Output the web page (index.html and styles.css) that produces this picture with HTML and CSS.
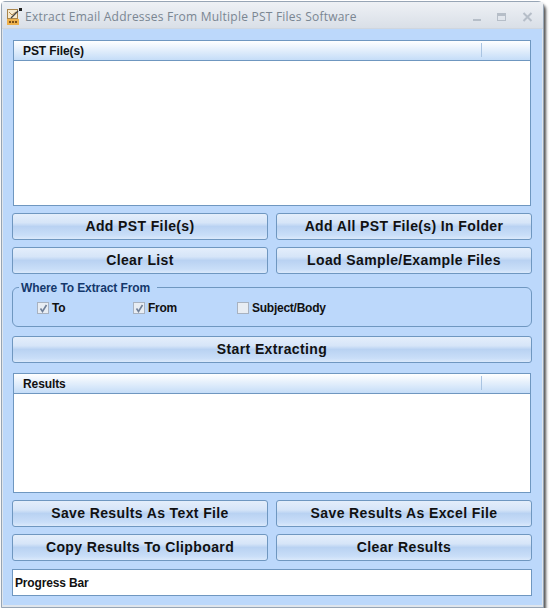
FILE: index.html
```html
<!DOCTYPE html>
<html lang="en">
<head>
  <meta charset="UTF-8">
  <title>Extract Email Addresses From Multiple PST Files Software</title>
  <link rel="stylesheet" href="styles.css">
</head>
<body>
  <div class="window">
    <div class="titlebar">
      <svg class="app-icon" width="18" height="18" viewBox="0 0 18 18">
        <rect x="1.5" y="1.5" width="10" height="9" fill="#f6ead0" stroke="#a8844c"/>
        <path d="M3 4l3 3 4-3" fill="none" stroke="#b08a50"/>
        <path d="M5 10l7-7" stroke="#444" stroke-width="1.2"/>
        <rect x="13" y="0" width="3" height="3" fill="#222"/>
        <rect x="1" y="11" width="12" height="6" fill="#eeb04a"/>
        <path d="M3 13h2v2H3zM6 13h2v2H6zM9 13h2v2H9z" fill="#7a5018"/>
      </svg>
      <span class="title">Extract Email Addresses From Multiple PST Files Software</span>
      <div class="win-buttons">
        <span class="win-min"></span>
        <span class="win-max"></span>
        <svg class="win-close" width="11" height="10" viewBox="0 0 11 10">
          <path d="M1.5 1l8 8M9.5 1l-8 8" stroke="#b6bec8" stroke-width="2"/>
        </svg>
      </div>
    </div>

    <div class="client">
      <div class="list list-files">
        <div class="list-head"><span class="col-name">PST File(s)</span><span class="col-rest"></span></div>
      </div>

      <div class="btn-row">
        <button>Add PST File(s)</button>
        <button>Add All PST File(s) In Folder</button>
      </div>
      <div class="btn-row">
        <button>Clear List</button>
        <button>Load Sample/Example Files</button>
      </div>

      <fieldset class="group">
        <legend>Where To Extract From</legend>
        <label class="check check-to"><span class="box"><svg width="9" height="9" viewBox="0 0 9 9"><path d="M1.5 4.5l2 3 4-6.5" fill="none" stroke="#6f7f98" stroke-width="1.6"/></svg></span>To</label>
        <label class="check check-from"><span class="box"><svg width="9" height="9" viewBox="0 0 9 9"><path d="M1.5 4.5l2 3 4-6.5" fill="none" stroke="#6f7f98" stroke-width="1.6"/></svg></span>From</label>
        <label class="check"><span class="box"></span>Subject/Body</label>
      </fieldset>

      <button class="btn-wide">Start Extracting</button>

      <div class="list list-results">
        <div class="list-head"><span class="col-name">Results</span><span class="col-rest"></span></div>
      </div>

      <div class="btn-row">
        <button>Save Results As Text File</button>
        <button>Save Results As Excel File</button>
      </div>
      <div class="btn-row">
        <button>Copy Results To Clipboard</button>
        <button>Clear Results</button>
      </div>

      <div class="progress">Progress Bar</div>
    </div>
  </div>
</body>
</html>
```

FILE: styles.css
```css
* {
  box-sizing: border-box;
}
body {
  margin: 0;
  background-color: #fff;
  font-family: "Liberation Sans", Arial, sans-serif;
}
.window {
  width: 543px;
  height: 607px;
  margin: 1px 0 0 1px;
  display: flex;
  flex-direction: column;
  border: 1px solid #97a5b5;
  border-top-right-radius: 6px;
  border-top-left-radius: 4px;
  box-shadow: 2px 3px 3px rgba(50, 50, 50, 0.85);
  background-color: #dfe5ec;
}
.titlebar {
  height: 27px;
  flex: none;
  display: flex;
  align-items: center;
  padding: 3px 0 0 4px;
  background: linear-gradient(#eef1f5, #d9dfe7);
  border-bottom: 1px solid #cfd6df;
}
.app-icon {
  flex: none;
}
.title {
  margin-left: 1px;
  font-family: "Open Sans", sans-serif;
  font-size: 12px;
  letter-spacing: 0.23px;
  color: #7a8692;
  white-space: nowrap;
}
.win-buttons {
  margin-left: auto;
  display: flex;
  align-items: center;
  gap: 16px;
  padding-right: 10px;
}
.win-min {
  width: 8px;
  height: 2px;
  margin-top: 6px;
  background-color: #b6bec8;
}
.win-max {
  width: 9px;
  height: 8px;
  border: 1px solid #b6bec8;
  border-top-width: 3px;
}
.client {
  flex: 1;
  margin: 0 1px 2px;
  padding: 11px 10px 0 9px;
  background-color: #bcd8fb;
  display: flex;
  flex-direction: column;
}
.list {
  margin: 0 1px;
  background-color: #fff;
  border: 1px solid #6f97c0;
}
.list-files {
  height: 166px;
}
.list-results {
  height: 120px;
  margin-top: 10px;
}
.list-head {
  height: 20px;
  display: flex;
  background: linear-gradient(#fff, #c5ddf8);
  border-bottom: 1px solid #6f97c0;
  font-size: 12px;
  font-weight: bold;
  color: #111;
  line-height: 21px;
}
.col-name {
  flex: 1;
  padding-left: 9px;
  letter-spacing: -0.1px;
}
.col-rest {
  width: 49px;
  margin: 2px 0 3px;
  border-left: 1px solid #a9c4e2;
}
.btn-row {
  display: flex;
  gap: 8px;
  margin-top: 7px;
}
button {
  flex: 1;
  height: 27px;
  padding: 0 0 2px;
  border: 1px solid #6f97c0;
  border-radius: 3px;
  background: linear-gradient(#e4eefb 0%, #d6e5f8 35%, #b9d2f2 50%, #c9def8 85%, #dbe9fb 100%);
  font-family: "Liberation Sans", Arial, sans-serif;
  font-size: 14px;
  font-weight: bold;
  letter-spacing: 0.38px;
  color: #111;
}
.btn-wide {
  flex: none;
  margin-top: 9px;
}
.group {
  height: 47px;
  margin: 6px 0 0;
  padding: 6px 0 0 24px;
  min-width: 0;
  display: flex;
  align-items: flex-start;
  border: 1px solid #6f97c0;
  border-radius: 6px;
}
.group legend {
  margin-left: -18px;
  padding: 1px 7px 0 2px;
  font-size: 12px;
  font-weight: bold;
  letter-spacing: -0.1px;
  color: #14386c;
}
.check {
  display: flex;
  align-items: center;
  gap: 3px;
  font-size: 12px;
  font-weight: bold;
  letter-spacing: -0.25px;
  color: #111;
}
.check-to {
  width: 96px;
}
.check-from {
  width: 104px;
}
.box {
  width: 12px;
  height: 12px;
  display: flex;
  align-items: center;
  justify-content: center;
  background-color: #e8edf3;
  border: 1px solid #a8b2c0;
}
.progress {
  height: 27px;
  margin-top: 8px;
  padding-left: 2px;
  background-color: #fff;
  border: 1px solid #6f97c0;
  font-size: 12px;
  font-weight: bold;
  letter-spacing: -0.15px;
  line-height: 26px;
  color: #111;
}
```
